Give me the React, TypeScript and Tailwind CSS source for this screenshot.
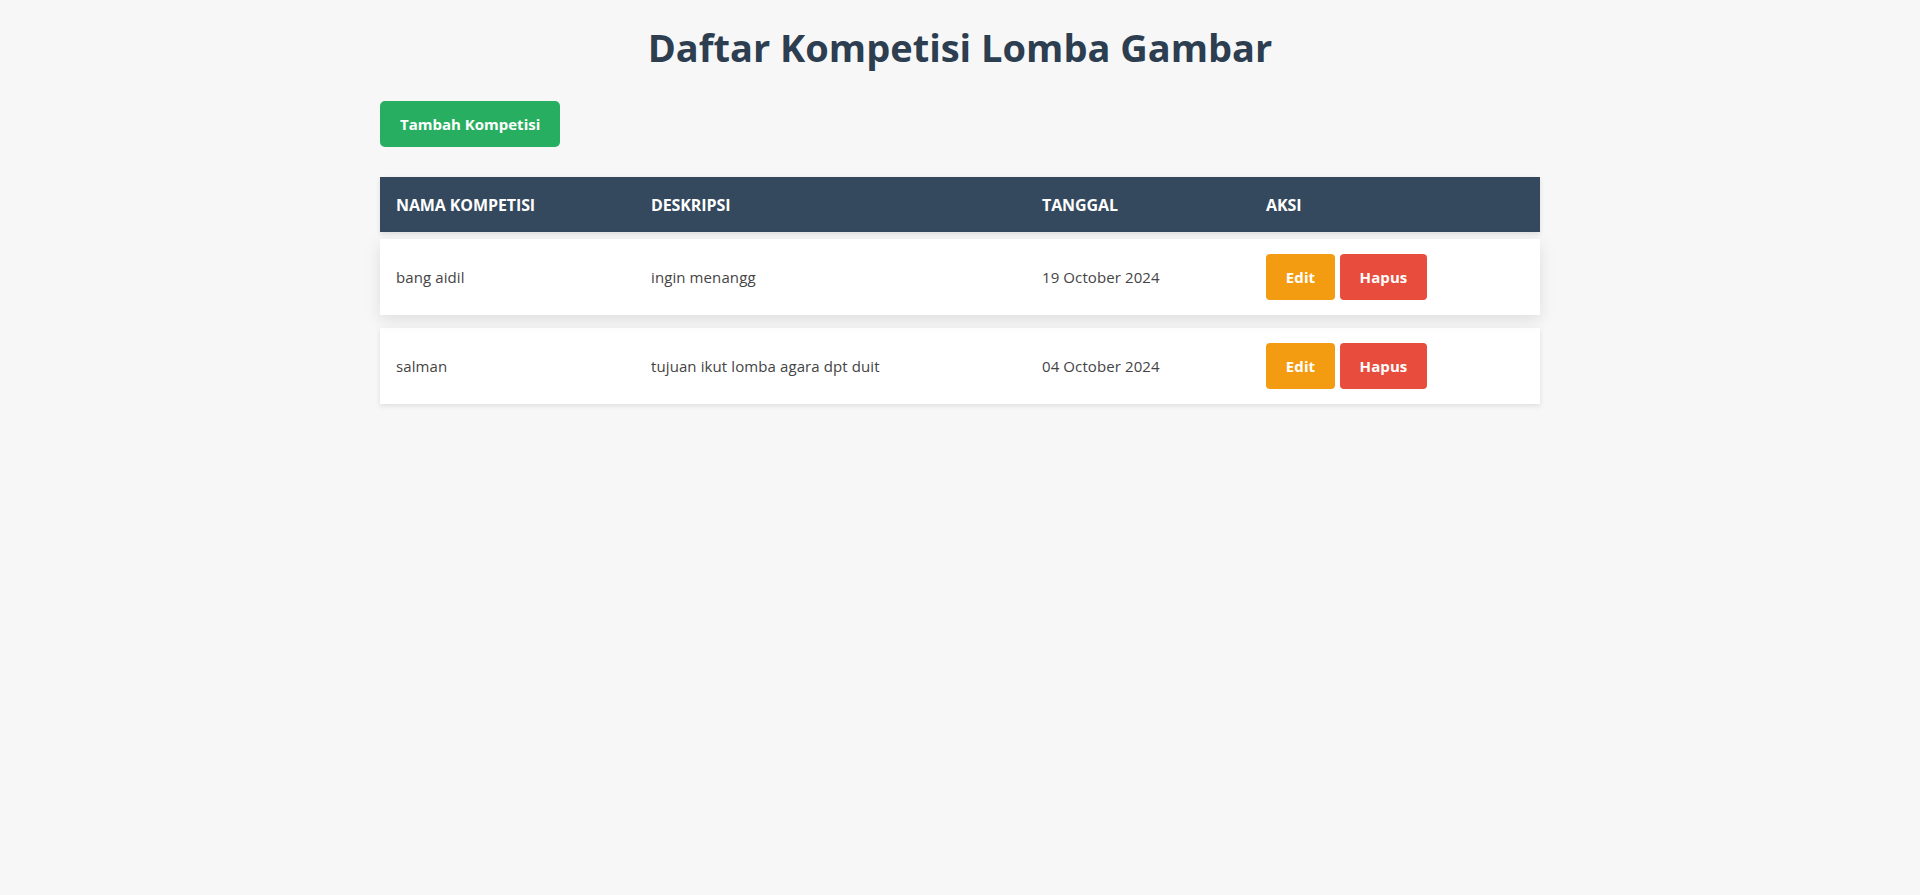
const rows = [
  { nama: "bang aidil", deskripsi: "ingin menangg", tanggal: "19 October 2024", hovered: true },
  { nama: "salman", deskripsi: "tujuan ikut lomba agara dpt duit", tanggal: "04 October 2024", hovered: false },
];

const cols = "grid grid-cols-[255px_391px_224px_290px] items-center";

const App = () => {
  return (
    <div className="min-h-[895px] bg-[#f7f7f7] font-['Open_Sans',sans-serif] text-[#333]">
      <div className="mx-auto w-[1160px] pt-[21px]">
        <h1 className="text-center text-[38px] font-bold leading-[52px] text-[#2c3e50]">
          Daftar Kompetisi Lomba Gambar
        </h1>
        <button className="mt-[28px] h-[46px] rounded-[5px] bg-[#27ae60] px-[20px] text-[15px] font-bold text-white">
          Tambah Kompetisi
        </button>

        <div className="mt-[30px] flex flex-col gap-[10px]">
          <div className={`${cols} h-[55px] bg-[#34495e] text-[16px] font-bold uppercase tracking-[-0.1px] text-white shadow-[0_2px_5px_rgba(0,0,0,0.1)]`}>
            <div className="px-4">Nama Kompetisi</div>
            <div className="px-4">Deskripsi</div>
            <div className="px-4">Tanggal</div>
            <div className="px-4">Aksi</div>
          </div>

          {rows.map((row) => (
            <div
              key={row.nama}
              className={`${cols} h-[76px] bg-white text-[15px] tracking-[0.1px] text-[#444] ${
                row.hovered
                  ? "-translate-y-[3px] shadow-[0_5px_15px_rgba(0,0,0,0.1)]"
                  : "shadow-[0_2px_5px_rgba(0,0,0,0.1)]"
              }`}
            >
              <div className="px-4">{row.nama}</div>
              <div className="px-4">{row.deskripsi}</div>
              <div className="px-4">{row.tanggal}</div>
              <div className="flex gap-[5px] px-4">
                <button className="h-[46px] w-[69px] rounded-[4px] bg-[#f39c12] text-[15px] font-bold text-white">
                  Edit
                </button>
                <button className="h-[46px] w-[87px] rounded-[4px] bg-[#e74c3c] text-[15px] font-bold text-white">
                  Hapus
                </button>
              </div>
            </div>
          ))}
        </div>
      </div>
    </div>
  );
};

export default App;
